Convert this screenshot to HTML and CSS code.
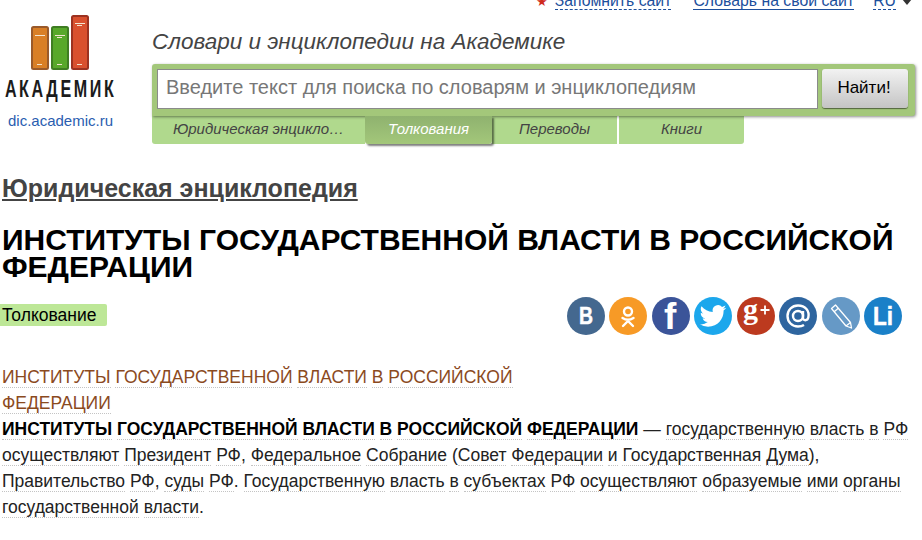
FILE: index.html
```html
<!DOCTYPE html>
<html lang="ru">
<head>
    <meta charset="UTF-8">
    <title>Институты государственной власти в Российской Федерации</title>
    <link rel="stylesheet" href="styles.css">
</head>
<body>
    <header class="header">
        <div class="logo">
            <svg class="logo-books" width="58" height="55" viewBox="0 0 58 55">
                <rect x="1" y="12" width="16" height="42" rx="1.500" fill="#d97f26" stroke="#9a5a2a" stroke-width="2"/>
                <rect x="21" y="12" width="16" height="42" rx="1.500" fill="#58a82a" stroke="#3f7d22" stroke-width="2"/>
                <rect x="41" y="1" width="16" height="53" rx="1.500" fill="#d9502e" stroke="#9c3220" stroke-width="2"/>
                <path d="M4 20.500h10M24 20.500h10M26 22.500h5M44 8.500h10M46 10.500h5M6 49.500h5M26 49.500h5M46 49.500h5" stroke="#f3e4d0" stroke-width="1"/>
            </svg>
            <div class="logo-name">АКАДЕМИК</div>
            <a class="logo-link" href="#">dic.academic.ru</a>
        </div>
        <div class="header-main">
            <div class="top-links">
                <span class="star">★</span>
                <a class="dashed" href="#">Запомнить сайт</a>
                <a class="solid" href="#">Словарь на свой сайт</a>
                <span class="lang"><a class="dashed" href="#">RU</a><i class="lang-arrow"></i></span>
            </div>
            <div class="tagline">Словари и энциклопедии на Академике</div>
            <form class="search">
                <div class="search-input">Введите текст для поиска по словарям и энциклопедиям</div>
                <div class="search-button">Найти!</div>
            </form>
            <div class="tabs">
                <a class="tab tab-first" href="#">Юридическая энцикло…</a>
                <a class="tab tab-active" href="#">Толкования</a>
                <a class="tab tab-third" href="#">Переводы</a>
                <a class="tab tab-last" href="#">Книги</a>
            </div>
        </div>
    </header>

    <main class="content">
        <h2 class="dict-title"><a href="#">Юридическая энциклопедия</a></h2>
        <h1 class="term">ИНСТИТУТЫ ГОСУДАРСТВЕННОЙ ВЛАСТИ В РОССИЙСКОЙ ФЕДЕРАЦИИ</h1>
        <div class="meta-row">
            <span class="badge">Толкование</span>
            <div class="share">
                <a class="share-icon vk" href="#"><svg viewBox="0 0 38 38"><text class="icon-text vk-b" x="12" y="27" textLength="14" lengthAdjust="spacingAndGlyphs">B</text></svg></a>
                <a class="share-icon ok" href="#"><svg viewBox="0 0 38 38"><circle cx="19" cy="14.500" r="4" fill="none" stroke="#fff" stroke-width="2.400"/><path d="M13.500 21c3.500 2.200 7.500 2.200 11 0M19 23v1.500M14 29l5-5 5 5" fill="none" stroke="#fff" stroke-width="2.400" stroke-linecap="round" stroke-linejoin="round"/></svg></a>
                <a class="share-icon fb" href="#"><svg viewBox="0 0 38 38"><text class="icon-text fb-f" x="12" y="32">f</text></svg></a>
                <a class="share-icon tw" href="#"><svg viewBox="0 0 24 24"><path transform="translate(3.600 3.600) scale(.7)" d="M23.950 4.570a10 10 0 0 1-2.830.78 4.960 4.960 0 0 0 2.160-2.720c-.95.550-2 .96-3.130 1.190a4.920 4.920 0 0 0-8.380 4.480C7.690 8.090 4.070 6.130 1.640 3.160a4.820 4.820 0 0 0-.67 2.480c0 1.710.87 3.210 2.190 4.100a4.900 4.900 0 0 1-2.230-.61v.06a4.920 4.920 0 0 0 3.950 4.830 4.990 4.990 0 0 1-2.210.08 4.940 4.940 0 0 0 4.600 3.420A9.870 9.870 0 0 1 0 19.540a13.940 13.940 0 0 0 7.550 2.210c9.050 0 14-7.500 14-13.980 0-.21 0-.42-.02-.63a9.940 9.940 0 0 0 2.420-2.570z" fill="#fff"/></svg></a>
                <a class="share-icon gp" href="#"><svg viewBox="0 0 38 38"><text x="6" y="22" class="gp-g">g</text><path d="M28 8.500v9M23.500 13h9" stroke="#fff" stroke-width="1.800"/></svg></a>
                <a class="share-icon mail" href="#"><svg viewBox="0 0 38 38"><circle cx="19" cy="19" r="5" fill="none" stroke="#fff" stroke-width="2.400"/><path d="M24 14v7c0 3 4.500 3 5.300-.5 1.500-6.500-3-12-10.300-12-6 0-10.500 4.500-10.500 10.500s4.500 10.500 10.500 10.500c2.500 0 4.500-.6 6-1.600" fill="none" stroke="#fff" stroke-width="2.400"/></svg></a>
                <a class="share-icon lj" href="#"><svg viewBox="0 0 38 38"><path d="M9.500 11.500l4-3.500 15 17.500 1 5.500-5.500-2zM12.500 14.500l3.500-3M24 29l4.500-3.500" fill="none" stroke="#fff" stroke-width="1.300" stroke-linejoin="round"/></svg></a>
                <a class="share-icon li" href="#"><svg viewBox="0 0 38 38"><text class="icon-text li-text" x="9" y="28" textLength="20" lengthAdjust="spacingAndGlyphs">Li</text></svg></a>
            </div>
        </div>

        <div class="article">
            <div class="article-head">
                <a href="#">ИНСТИТУТЫ</a> <a href="#">ГОСУДАРСТВЕННОЙ</a> <a href="#">ВЛАСТИ</a> <a href="#">В</a> <a href="#">РОССИЙСКОЙ</a> <a href="#">ФЕДЕРАЦИИ</a>
            </div>
            <p class="article-text">
                <strong><a href="#">ИНСТИТУТЫ</a> <a href="#">ГОСУДАРСТВЕННОЙ</a> <a href="#">ВЛАСТИ</a> <a href="#">В</a> <a href="#">РОССИЙСКОЙ</a> <a href="#">ФЕДЕРАЦИИ</a></strong> — <a href="#">государственную</a> <a href="#">власть</a> <a href="#">в</a> <a href="#">РФ</a> <a href="#">осуществляют</a> <a href="#">Президент</a> <a href="#">РФ</a>, <a href="#">Федеральное</a> <a href="#">Собрание</a> (<a href="#">Совет</a> <a href="#">Федерации</a> <a href="#">и</a> <a href="#">Государственная</a> <a href="#">Дума</a>), <a href="#">Правительство</a> <a href="#">РФ</a>, <a href="#">суды</a> <a href="#">РФ</a>. <a href="#">Государственную</a> <a href="#">власть</a> <a href="#">в</a> <a href="#">субъектах</a> <a href="#">РФ</a> <a href="#">осуществляют</a> <a href="#">образуемые</a> <a href="#">ими</a> <a href="#">органы</a> <a href="#">государственной</a> <a href="#">власти</a>.
            </p>
        </div>
    </main>
</body>
</html>
```

FILE: styles.css
```css
* {
    box-sizing: border-box;
}

html, body {
    height: 540px;
    overflow: hidden;
}

body {
    margin: 0;
    font-family: 'Liberation Sans', Arial, sans-serif;
    color: #000;
    background: #fff;
}

a {
    color: inherit;
    text-decoration: none;
}

.header {
    display: flex;
    height: 152px;
    margin-top: -8px;
}

.logo {
    width: 152px;
    padding: 23px 31px 0 0;
    display: flex;
    flex-direction: column;
    align-items: center;
    flex-shrink: 0;
}

.logo-books {
    display: block;
    margin-right: 1px;
}

.logo-name {
    font-weight: bold;
    font-size: 23px;
    line-height: 22px;
    margin-top: 8px;
    color: #1b1b1b;
    white-space: nowrap;
    letter-spacing: 3.700px;
    transform: scaleX(.7);
}

.logo-link {
    margin-top: 12px;
    font-size: 15px;
    line-height: 17px;
    color: #2a5db0;
    white-space: nowrap;
}

.header-main {
    width: 763px;
}

.top-links {
    height: 18px;
    display: flex;
    justify-content: flex-end;
    align-items: flex-end;
    font-size: 15.800px;
    line-height: 16px;
    color: #1d4f9c;
    white-space: nowrap;
    padding-right: 3px;
}

.star {
    color: #cf2a1c;
    font-size: 13px;
    margin-right: 7px;
}

.dashed {
    border-bottom: 1px dashed #1d4f9c;
}

.solid {
    border-bottom: 1px solid #1d4f9c;
    margin-left: 22px;
}

.lang {
    margin-left: 19px;
    display: flex;
    align-items: center;
}

.lang-arrow {
    width: 0;
    height: 0;
    border: 5px solid transparent;
    border-top: 6px solid #333;
    border-bottom: 0;
    margin-left: 6px;
}

.tagline {
    font-style: italic;
    font-size: 22.500px;
    line-height: 24px;
    color: #444;
    margin-top: 20px;
}

.search {
    display: flex;
    gap: 4px;
    position: relative;
    z-index: 1;
    height: 52px;
    margin-top: 10px;
    padding: 5px 7px 7px 5px;
    background: #a3c77a;
    border-radius: 3px 3px 3px 0;
    box-shadow: 1px 1px 3px rgba(0, 0, 0, .45);
}

.search-input {
    flex: 1;
    height: 40px;
    padding-left: 8px;
    background: #fff;
    border: 1px solid #8a8a8a;
    font-size: 20px;
    line-height: 34px;
    color: #777;
}

.search-button {
    width: 86px;
    height: 39px;
    padding-right: 2px;
    background: linear-gradient(#f2f2f2, #c4c4c4);
    border-radius: 3px;
    font-size: 17px;
    line-height: 38px;
    text-align: center;
    box-shadow: 0 1px 1px rgba(0, 0, 0, .5);
}

.tabs {
    display: flex;
    height: 28px;
}

.tab {
    font-style: italic;
    font-size: 15px;
    line-height: 26px;
    text-align: center;
    color: #444;
    background: #b0d98d;
}

.tab-first {
    width: 213px;
    border-radius: 0 0 0 3px;
}

.tab-active {
    width: 127px;
    color: #fff;
    background: linear-gradient(#8fb26f, #a3c77a);
    border-radius: 0 0 3px 3px;
    box-shadow: 2px 2px 2px rgba(0, 0, 0, .5);
    position: relative;
    z-index: 2;
}

.tab-third {
    width: 127px;
    border-right: 2px solid #fff;
}

.tab-last {
    width: 125px;
    border-radius: 0 0 3px 0;
}

.content {
    padding: 0 2px;
}

.dict-title {
    margin: 30px 0 0;
    font-size: 25px;
    line-height: 29px;
    font-weight: bold;
    color: #444;
}

.dict-title a {
    text-decoration: underline;
}

.term {
    margin: 23px 0 0;
    font-size: 30px;
    line-height: 27px;
    font-weight: bold;
}

.meta-row {
    display: flex;
    justify-content: space-between;
    align-items: flex-start;
    margin-top: 17px;
    height: 67px;
}

.badge {
    margin: 7px 0 0 -2px;
    padding: 0 11px 0 2px;
    height: 22px;
    font-size: 17.500px;
    line-height: 22px;
    background: #bde797;
    border-radius: 0 2px 2px 0;
}

.share {
    display: flex;
    gap: 4.500px;
    padding-right: 18px;
}

.share-icon {
    display: block;
    width: 38px;
    height: 38px;
    border-radius: 50%;
}

.share-icon svg {
    display: block;
    width: 100%;
    height: 100%;
}

.vk { background: #44688f; }
.ok { background: #f79a26; }
.fb { background: #3b5499; }
.tw { background: #1ca7ec; }
.gp { background: #bc3a1f; }
.mail { background: #2e659f; }
.lj { background: #6699c6; }
.li { background: #1a80c8; }

.icon-text {
    font-family: 'Liberation Sans', Arial, sans-serif;
    font-weight: bold;
    fill: #fff;
}

.vk-b {
    font-size: 24px;
    stroke: #fff;
    stroke-width: .5px;
}

.fb-f {
    font-size: 37px;
}

.li-text {
    font-size: 26px;
    stroke: #fff;
    stroke-width: .5px;
}

.gp-g {
    font-family: 'Liberation Serif', serif;
    font-weight: bold;
    font-size: 30px;
    fill: #fff;
}

.article {
    font-size: 17.500px;
    line-height: 26px;
}

.article-head {
    width: 520px;
    color: #8b4a1e;
}

.article a {
    border-bottom: 1px dotted #c4c4c4;
}

.article-text {
    margin: 0;
    color: #222;
}

.article-text strong {
    color: #000;
}
```
